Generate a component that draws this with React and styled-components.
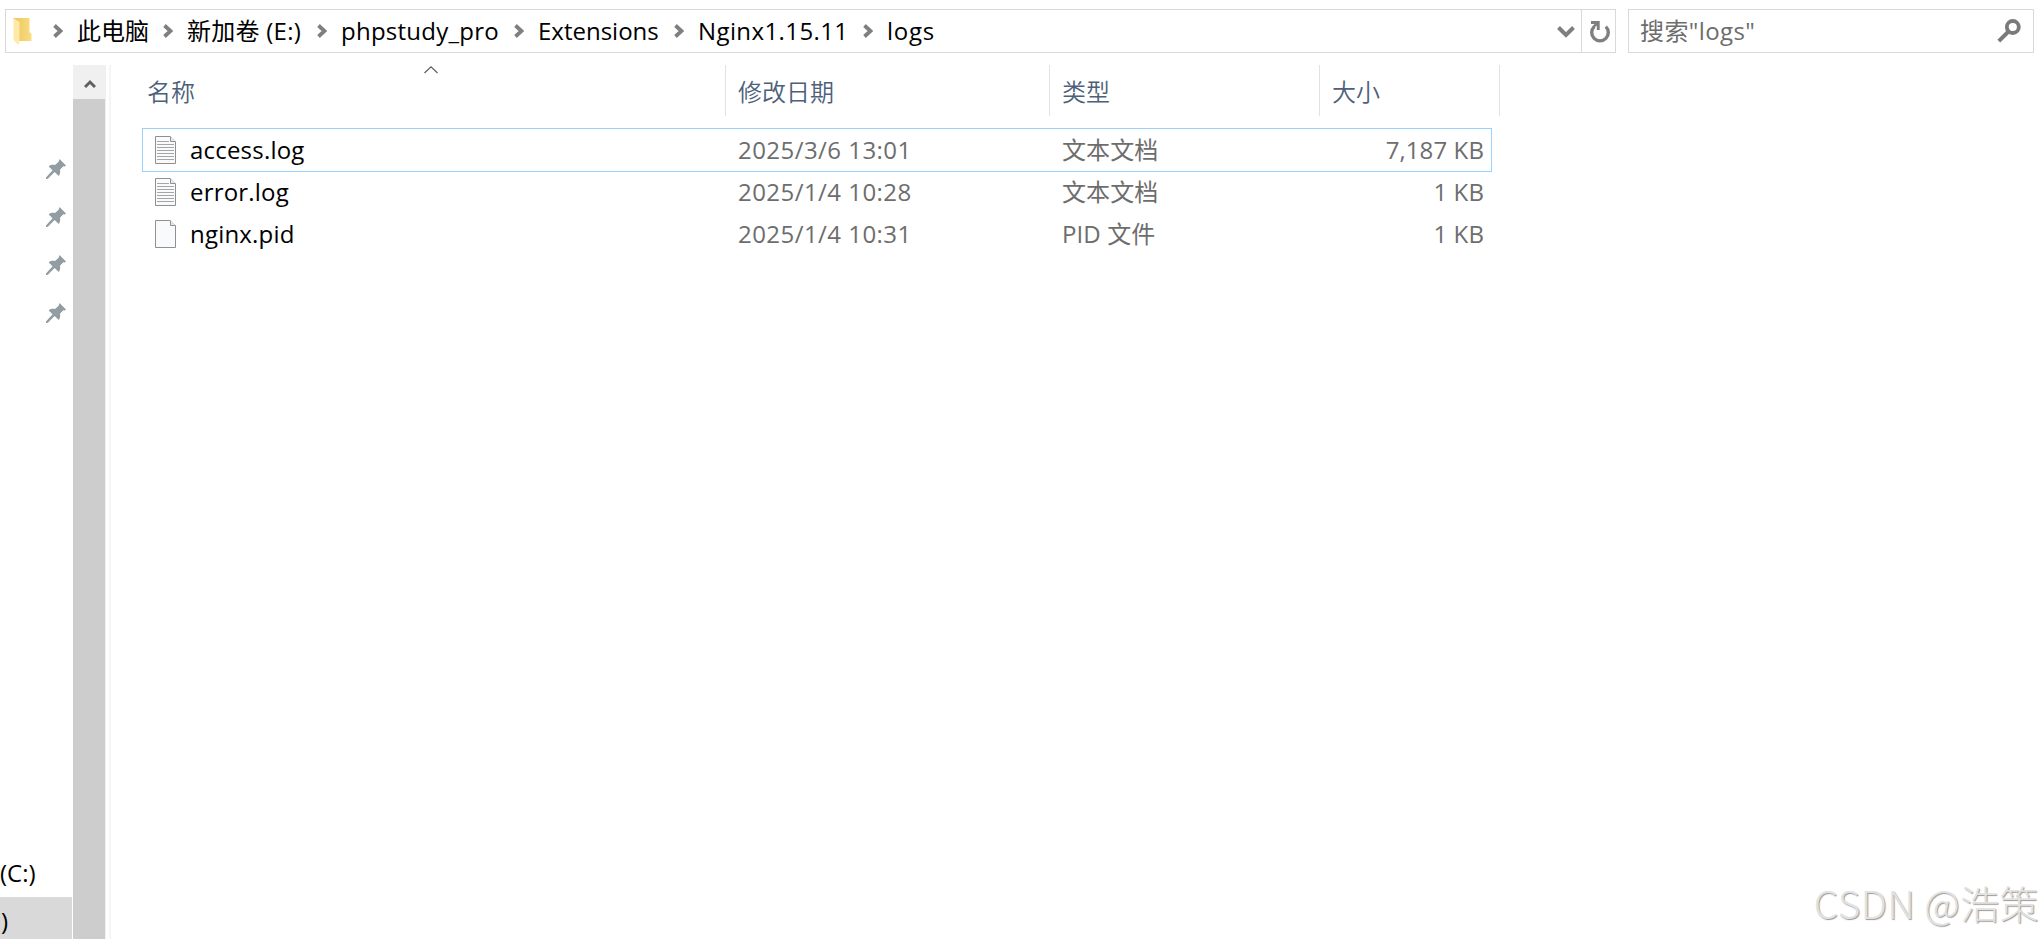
import React from "react";
import styled, { createGlobalStyle } from "styled-components";

const crumbs = [
  { name: "此电脑", width: 110 },
  { name: "新加卷 (E:)", width: 154, spacing: 0.25 },
  { name: "phpstudy_pro", width: 197, spacing: 0.25 },
  { name: "Extensions", width: 160, spacing: 0 },
  { name: "Nginx1.15.11", width: 189, spacing: 0.4 },
];

const files = [
  { name: "access.log", date: "2025/3/6 13:01", type: "文本文档", size: "7,187 KB", text: true, selected: true },
  { name: "error.log", date: "2025/1/4 10:28", type: "文本文档", size: "1 KB", text: true },
  { name: "nginx.pid", date: "2025/1/4 10:31", type: "PID 文件", size: "1 KB" },
];

const Chevron = () => (
  <ChevronIcon viewBox="0 0 10 14">
    <path d="M1.5 1.5L7.5 7L1.5 12.5" fill="none" stroke="#7f7f7f" strokeWidth="3.8" />
  </ChevronIcon>
);

const Folder = () => (
  <svg width="19" height="28" viewBox="0 0 19 28">
    <defs>
      <linearGradient id="folder" x1="0" x2="1">
        <stop offset="0" stopColor="#e9c55b" />
        <stop offset="1" stopColor="#fbdc82" />
      </linearGradient>
    </defs>
    <path d="M0.5 1H16.5V15L18.5 17V24H5Z" fill="url(#folder)" />
    <path d="M0.5 1L6.5 5V24L5.5 28L0.5 23Z" fill="#ffe9a6" />
  </svg>
);

const Pin = () => (
  <PinIcon viewBox="0 0 20 20">
    <path
      d="M13.6 0L20 6.6L18.8 7.4L17.3 7.3L14 10.7C14.5 13 14 15.4 12.7 17L8.6 13L1.6 20H0V18.4L6.6 11.3L2.7 7.4C4.6 5.8 7 5.6 9 6.1L12.6 2.8Z"
      fill="#929da3"
    />
  </PinIcon>
);

const FileIcon = ({ text }) => (
  <svg width="21" height="28" viewBox="0 0 21 28">
    <path d="M0.5 0.5H15L20.5 6V27.5H0.5Z" fill="#f9fafb" stroke="#909090" />
    <path d="M15.5 0.5V5.5H20.5" fill="#e8e8e8" stroke="#909090" />
    {text && (
      <path
        d="M2 5.5H14M2 8.5H19M2 11.5H19M2 14.5H19M2 17.5H19M2 20.5H19M2 23.5H19"
        stroke="#a5a5a5"
      />
    )}
  </svg>
);

const App = () => (
  <Window>
    <GlobalStyle />
    <TopBar>
      <AddressBar>
        <Folder />
        <Crumbs>
          <Chevron />
          {crumbs.map((c) => (
            <Crumb key={c.name} $width={c.width} $spacing={c.spacing}>
              <span>{c.name}</span>
              <Chevron />
            </Crumb>
          ))}
          <Crumb $spacing={0.7}>logs</Crumb>
        </Crumbs>
        <DropIcon viewBox="0 0 18 12">
          <path d="M1.5 1.5L9 9L16.5 1.5" fill="none" stroke="#7f7f7f" strokeWidth="4" />
        </DropIcon>
        <Refresh>
          <svg width="20" height="22" viewBox="0 0 20 22">
            <path d="M4.2 5.6A8.3 8.3 0 1 0 15.8 5.6" fill="none" stroke="#7f7f7f" strokeWidth="3.4" />
            <path d="M1 0H9.7V9H6.8V4.6L4 7L2.6 5L4.6 3H1Z" fill="#7f7f7f" />
          </svg>
        </Refresh>
      </AddressBar>
      <SearchBox>
        <span>搜索"logs"</span>
        <svg width="24" height="24" viewBox="0 0 24 24">
          <circle cx="15.8" cy="8" r="6" fill="none" stroke="#7a7a7a" strokeWidth="3.8" />
          <path d="M11.5 12.5L1.8 22.2" stroke="#7a7a7a" strokeWidth="4" />
        </svg>
      </SearchBox>
    </TopBar>
    <Main>
      <Nav>
        {[0, 1, 2, 3].map((n) => (
          <NavItem key={n}>
            <Pin />
          </NavItem>
        ))}
        <Drive>(C:)</Drive>
        <Drive $active>)</Drive>
      </Nav>
      <Scrollbar>
        <ScrollUp>
          <svg width="12" height="10" viewBox="0 0 12 10">
            <path d="M1 8L6 3L11 8" fill="none" stroke="#606060" strokeWidth="3" />
          </svg>
        </ScrollUp>
        <Thumb />
      </Scrollbar>
      <Pane>
        <Header>
          <HeaderCell>
            名称
            <SortIcon viewBox="0 0 14 8">
              <path d="M0.5 7L7 0.8L13.5 7" fill="none" stroke="#5a5a5a" strokeWidth="1.1" />
            </SortIcon>
          </HeaderCell>
          <HeaderCell>修改日期</HeaderCell>
          <HeaderCell>类型</HeaderCell>
          <HeaderCell>大小</HeaderCell>
        </Header>
        {files.map((f) => (
          <Row key={f.name} $selected={f.selected}>
            <Name>
              <FileIcon text={f.text} />
              {f.name}
            </Name>
            <Cell>{f.date}</Cell>
            <Type>{f.type}</Type>
            <Size>{f.size}</Size>
          </Row>
        ))}
      </Pane>
    </Main>
    <Watermark>CSDN @浩策</Watermark>
  </Window>
);

export default App;

const GlobalStyle = createGlobalStyle`
  * {
    box-sizing: border-box;
  }
  body {
    margin: 0;
    background: #fff;
    font-family: "Open Sans", "Noto Sans CJK SC", sans-serif;
    font-size: 24px;
    line-height: 32px;
    color: #000;
  }
  svg {
    display: block;
    flex: none;
  }
`;

const Window = styled.div`
  position: relative;
  display: flex;
  flex-direction: column;
  width: 2043px;
  height: 939px;
  overflow: hidden;
  white-space: nowrap;
`;

const TopBar = styled.div`
  display: flex;
  gap: 12px;
  height: 65px;
  padding: 9px 9px 12px 5px;
`;

const AddressBar = styled.div`
  display: flex;
  align-items: center;
  width: 1611px;
  height: 44px;
  padding-left: 7px;
  border: 1px solid #d9d9d9;
`;

const Crumbs = styled.div`
  display: flex;
  align-items: center;
  flex: 1;
  padding-left: 21px;
`;

const ChevronIcon = styled.svg`
  width: 10px;
  height: 14px;
`;

const Crumb = styled.div`
  display: flex;
  align-items: center;
  justify-content: space-between;
  width: ${(props) => (props.$width ? `${props.$width - 14}px` : "auto")};
  margin-left: 14px;
  letter-spacing: ${(props) => props.$spacing || 0}px;
`;

const DropIcon = styled.svg`
  width: 18px;
  height: 12px;
  margin: 2px 6px 0 0;
`;

const Refresh = styled.div`
  display: flex;
  align-items: center;
  justify-content: center;
  width: 34px;
  height: 42px;
  padding: 2px 0 0 2px;
  border-left: 1px solid #d9d9d9;
`;

const SearchBox = styled.div`
  display: flex;
  align-items: center;
  justify-content: space-between;
  flex: 1;
  height: 44px;
  padding: 0 12px 0 11px;
  border: 1px solid #d9d9d9;
  color: #6d6d6d;
  letter-spacing: 0.4px;
`;

const Main = styled.div`
  display: flex;
  flex: 1;
  min-height: 0;
`;

const Nav = styled.div`
  display: flex;
  flex-direction: column;
  width: 73px;
  padding: 80px 1px 0 0;
`;

const NavItem = styled.div`
  display: flex;
  align-items: center;
  justify-content: flex-end;
  height: 48px;
  padding-right: 6px;
`;

const PinIcon = styled.svg`
  width: 20px;
  height: 20px;
`;

const Drive = styled.div`
  flex: none;
  height: ${(props) => (props.$active ? 42 : 48)}px;
  margin-top: ${(props) => (props.$active ? 0 : "auto")};
  padding: 8px 0 0 ${(props) => (props.$active ? 1 : 0)}px;
  background: ${(props) => (props.$active ? "#d9d9d9" : "none")};
`;

const Scrollbar = styled.div`
  display: flex;
  flex-direction: column;
  width: 33px;
  background: #f0f0f0;
`;

const ScrollUp = styled.div`
  display: flex;
  align-items: center;
  justify-content: center;
  height: 34px;
  padding-top: 3px;
`;

const Thumb = styled.div`
  flex: 1;
  width: 32px;
  background: #cdcdcd;
`;

const Pane = styled.div`
  flex: 1;
  margin-left: 3px;
  padding-left: 31px;
  border-left: 2px solid #f5f5f5;
`;

const Header = styled.div`
  display: grid;
  grid-template-columns: 584px 324px 270px 180px;
  height: 51px;
  margin-bottom: 12px;
`;

const HeaderCell = styled.div`
  position: relative;
  padding: 11px 0 0 12px;
  border-right: 1px solid #e2e2e2;
  color: #4c607a;
  font-weight: 350;

  &:first-child {
    padding-left: 5px;
  }
`;

const SortIcon = styled.svg`
  position: absolute;
  top: 1px;
  left: 282px;
  width: 14px;
  height: 8px;
`;

const Row = styled.div`
  display: grid;
  grid-template-columns: 583px 324px 270px 171px;
  align-items: center;
  width: 1350px;
  height: 44px;
  margin-bottom: -2px;
  border: 1px solid ${(props) => (props.$selected ? "#99d1ff" : "transparent")};
`;

const Name = styled.div`
  display: flex;
  align-items: center;
  gap: 14px;
  padding-left: 12px;
  letter-spacing: 0.2px;
`;

const Cell = styled.div`
  padding-left: 12px;
  color: #6d6d6d;
  letter-spacing: 0.45px;
`;

const Type = styled(Cell)`
  letter-spacing: 0.1px;
`;

const Size = styled(Cell)`
  padding: 0 7px 0 0;
  text-align: right;
  letter-spacing: 0.1px;
`;

const Watermark = styled.div`
  position: absolute;
  right: 4px;
  bottom: 9px;
  font-family: "Noto Sans CJK SC", sans-serif;
  font-size: 39px;
  font-weight: 300;
  line-height: 56px;
  letter-spacing: 0.4px;
  color: #e2e2e2;
  text-shadow: 1px 1px 1px #999;
`;
